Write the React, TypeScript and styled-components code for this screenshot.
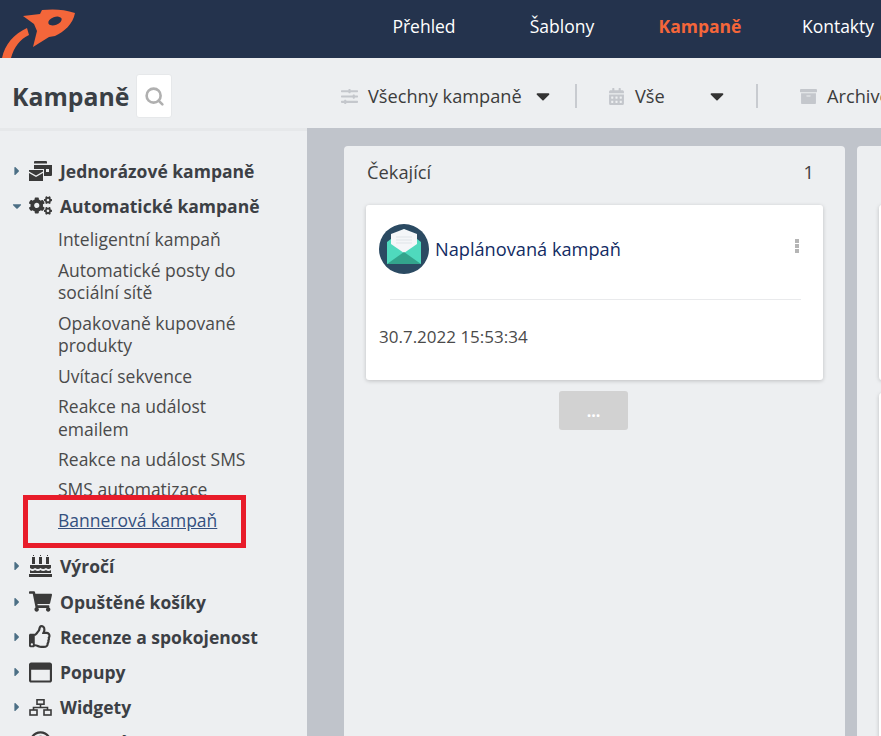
import React from 'react';
import styled, { createGlobalStyle } from 'styled-components';
import { FaCaretDown, FaCaretRight, FaCogs, FaShoppingCart, FaRegThumbsUp, FaRegWindowMaximize, FaSlidersH, FaCalendarAlt, FaArchive, FaRegClock } from 'react-icons/fa';
import { Search } from 'lucide-react';

const Global = createGlobalStyle`
    html, body { margin: 0; padding: 0; height: 100%; overflow: hidden; }
    body { font-family: "Open Sans", "Noto Sans", sans-serif; background: #edeff1; color: #3c3c3c; }
    a { color: inherit; }
`;

const Page = styled.div`
    position: relative;
    width: 881px;
    height: 736px;
    overflow: hidden;
    display: flex;
    flex-direction: column;
`;

const TopBar = styled.header`
    height: 58px;
    flex: none;
    background: #24334d;
    display: flex;
    overflow: hidden;
`;

const Logo = styled.svg`
    width: 78px;
    height: 58px;
    display: block;
    flex: none;
`;

const Nav = styled.nav`
    display: flex;
    align-items: center;
    margin-left: 277px;
    padding-bottom: 6px;
`;

const NavItem = styled.a<{ $active?: boolean }>`
    width: 138px;
    flex: none;
    text-align: center;
    font-size: 17.5px;
    font-weight: ${p => (p.$active ? 700 : 400)};
    color: ${p => (p.$active ? '#f4663a' : '#fff')};
    white-space: nowrap;
`;

const SubBar = styled.div`
    height: 70px;
    flex: none;
    display: flex;
    align-items: center;
    overflow: hidden;
    padding-top: 6px;
    box-sizing: border-box;
`;

const TitleBlock = styled.div`
    width: 341px;
    flex: none;
    display: flex;
    align-items: center;
    gap: 7px;
    padding-left: 12px;
    box-sizing: border-box;
`;

const Title = styled.h1`
    margin: 0;
    font-size: 24.8px;
    font-weight: 700;
    color: #3a3f45;
`;

const SearchBox = styled.div`
    width: 36px;
    height: 44px;
    background: #fff;
    border: 1px solid #e6e8ea;
    border-radius: 3px;
    box-sizing: border-box;
    display: flex;
    align-items: center;
    justify-content: center;
    color: #b0b0b0;
`;

const Filters = styled.div`
    display: flex;
    align-items: center;
    white-space: nowrap;
    font-size: 18.2px;
    color: #3c3c3c;
`;

const Filter = styled.div<{ $width: number }>`
    width: ${p => p.$width}px;
    flex: none;
    display: flex;
    align-items: center;
    gap: 10px;
    svg.lead { color: #c4c7cc; font-size: 17px; flex: none; }
    svg.caret { color: #333; font-size: 22px; margin-left: auto; flex: none; }
`;

const Divider = styled.span<{ $margin: number }>`
    width: 2px;
    height: 24px;
    background: #c8cbd0;
    flex: none;
    margin: 0 ${p => p.$margin}px 0 28px;
`;

const Body = styled.div`
    flex: 1;
    min-height: 0;
    display: flex;
`;

const Sidebar = styled.aside`
    width: 307px;
    flex: none;
    padding: 22px 0 0 12px;
    box-sizing: border-box;
    border-top: 3px solid #e6e8ea;
    overflow: hidden;
`;

const Group = styled.div`
    height: 35.2px;
    display: flex;
    align-items: center;
    font-size: 17.5px;
    font-weight: 700;
    color: #3c4045;
    white-space: nowrap;
`;

const Caret = styled.span`
    width: 19px;
    flex: none;
    color: #4c6f85;
    font-size: 14px;
    display: flex;
    margin-left: -2px;
`;

const GroupIcon = styled.span`
    width: 31px;
    flex: none;
    display: flex;
    font-size: 23px;
    color: #3a3a3a;
`;

const SubList = styled.div`
    padding: 2px 40px 0 46px;
    margin-bottom: 13px;
`;

const SubItem = styled.a<{ $link?: boolean }>`
    display: block;
    font-size: 17.5px;
    line-height: 22.7px;
    padding: 3px 0 4.6px;
    color: ${p => (p.$link ? '#34507f' : '#4a4a4a')};
    text-decoration: ${p => (p.$link ? 'underline' : 'none')};
`;

const Highlight = styled.div`
    position: absolute;
    left: 23px;
    top: 495px;
    width: 223px;
    height: 53px;
    border: 5px solid #e81c2a;
    box-sizing: border-box;
`;

const Board = styled.main`
    flex: 1;
    min-width: 0;
    background: #c0c4cb;
    padding: 18px 0 0 37px;
    display: flex;
    gap: 12px;
    overflow: hidden;
`;

const Column = styled.section`
    width: 501px;
    flex: none;
    background: #edeff1;
    border-radius: 4px 4px 0 0;
    padding: 0 22px;
    box-sizing: border-box;
`;

const ColumnHead = styled.div`
    height: 59px;
    display: flex;
    align-items: center;
    justify-content: space-between;
    font-size: 18.3px;
    padding: 0 9px 8px 1px;
    box-sizing: border-box;
    color: #3f3f3f;
`;

const Card = styled.article<{ $tall?: boolean }>`
    background: #fff;
    border-radius: 3px;
    box-shadow: 0 1px 4px rgba(0, 0, 0, 0.2);
    height: ${p => (p.$tall ? 400 : 175)}px;
    margin-bottom: 13px;
    padding: 0 13px;
    box-sizing: border-box;
`;

const CardHead = styled.div`
    height: 94px;
    display: flex;
    align-items: center;
    gap: 6px;
    padding-bottom: 7px;
    box-sizing: border-box;
`;

const CardTitle = styled.span`
    font-size: 18.2px;
    font-weight: 500;
    color: #122b63;
`;

const MoreDots = styled.svg`
    width: 4px;
    height: 14px;
    margin: 0 11px 6px auto;
    flex: none;
`;

const CardRule = styled.hr`
    border: 0;
    border-top: 1px solid #e9eaec;
    margin: 0 9px 0 11px;
`;

const CardDate = styled.div`
    font-size: 17px;
    color: #4a4a4a;
    margin-top: 25px;
`;

const MoreButton = styled.button`
    display: block;
    width: 69px;
    height: 39px;
    margin: -2px 0 0 193px;
    border: 0;
    border-radius: 3px;
    background: #d2d2d2;
    color: #fff;
    font: 700 16px "Open Sans", sans-serif;
`;

const EnvelopeIcon = () => (
    <svg width="50" height="50" viewBox="0 0 50 50">
        <circle cx="25" cy="25" r="25" fill="#2b4a62" />
        <path d="M8 18 L25 5 L42 18 V40 H8 Z" fill="#4fd9bd" />
        <path d="M12 20 V10 L25 5 L38 10 V20 L25 29 Z" fill="#f4f6f8" />
        <path d="M17 13 H33 M17 16 H33 M17 19 H33" stroke="#dfe4e8" strokeWidth="1" />
        <path d="M8 40 L25 28 L42 40 Z" fill="#33a48c" />
    </svg>
);

const RocketLogo = () => (
    <Logo viewBox="0 0 78 58">
        <path d="M2 58 C5 44 14 34 27 28 L29 35 C20 39 14 47 11 58 Z" fill="#f4663a" />
        <path d="M23 16 L40 14 L42 10 C52 9 64 9 75 13 C73 24 64 32 55 36 L49 37 L33 47 L37 31 L34 24 Z" fill="#f4663a" />
        <ellipse cx="55" cy="21" rx="7" ry="4" transform="rotate(-20 55 21)" fill="#24334d" />
    </Logo>
);

const MailCaseIcon = () => (
    <svg width="23" height="20" viewBox="0 0 23 20" fill="currentColor">
        <path d="M5 2.5 V1 Q5 0 6 0 H17 Q18 0 18 1 V2.5 Z" />
        <path d="M5 4 H23 V14 Q23 15 22 15 H15 V8 H5 Z" />
        <rect x="17" y="8" width="3" height="3" fill="#edeff1" />
        <path d="M0 9 H14 V10.5 L7 14.5 L0 10.5 Z" />
        <path d="M0 12 L7 16 L14 12 V20 H0 Z" />
    </svg>
);

const CakeIcon = () => (
    <svg width="23" height="22" viewBox="0 0 23 22" fill="currentColor">
        <path d="M3 2 H6 V9 H3 Z M10 2 H13 V9 H10 Z M17 2 H20 V9 H17 Z" />
        <path d="M4 0 H5 V1 H4 Z M11 0 H12 V1 H11 Z M18 0 H19 V1 H18 Z" />
        <path d="M1 10 H22 V13 Q19.5 15 17 13 Q14 15 11.5 13 Q9 15 6 13 Q3.5 15 1 13 Z" />
        <path d="M1 15 Q3.5 17 6 15 Q9 17 11.5 15 Q14 17 17 15 Q19.5 17 22 15 V18 H1 Z" />
        <path d="M0 19 H23 V22 H0 Z" />
    </svg>
);

const NetworkIcon = () => (
    <svg width="23" height="17" viewBox="0 0 23 17" fill="none" stroke="currentColor" strokeWidth="1.6">
        <rect x="8" y="0.8" width="7" height="4.4" />
        <path d="M11.5 5 V8.5 M4.5 11 V8.5 H18.5 V11" />
        <rect x="1" y="11" width="7" height="5" />
        <rect x="15" y="11" width="7" height="5" />
    </svg>
);

const subItems = [
    'Inteligentní kampaň',
    'Automatické posty do sociální sítě',
    'Opakovaně kupované produkty',
    'Uvítací sekvence',
    'Reakce na událost emailem',
    'Reakce na událost SMS',
    'SMS automatizace',
];

const lowerGroups = [
    { name: 'Výročí', icon: <CakeIcon /> },
    { name: 'Opuštěné košíky', icon: <FaShoppingCart /> },
    { name: 'Recenze a spokojenost', icon: <FaRegThumbsUp /> },
    { name: 'Popupy', icon: <FaRegWindowMaximize /> },
    { name: 'Widgety', icon: <NetworkIcon /> },
    { name: 'Ostatní', icon: <FaRegClock /> },
];

export default function App() {
    return (
        <Page>
            <Global />
            <TopBar>
                <RocketLogo />
                <Nav>
                    <NavItem>Přehled</NavItem>
                    <NavItem>Šablony</NavItem>
                    <NavItem $active>Kampaně</NavItem>
                    <NavItem>Kontakty</NavItem>
                </Nav>
            </TopBar>
            <SubBar>
                <TitleBlock>
                    <Title>Kampaně</Title>
                    <SearchBox><Search size={21} strokeWidth={3} /></SearchBox>
                </TitleBlock>
                <Filters>
                    <Filter $width={206}>
                        <FaSlidersH className="lead" />
                        Všechny kampaně
                        <FaCaretDown className="caret" />
                    </Filter>
                    <Divider $margin={31} />
                    <Filter $width={120}>
                        <FaCalendarAlt className="lead" />
                        Vše
                        <FaCaretDown className="caret" />
                    </Filter>
                    <Divider $margin={42} />
                    <Filter $width={160}>
                        <FaArchive className="lead" />
                        Archivované
                    </Filter>
                </Filters>
            </SubBar>
            <Body>
                <Sidebar>
                    <Group>
                        <Caret><FaCaretRight /></Caret>
                        <GroupIcon><MailCaseIcon /></GroupIcon>
                        Jednorázové kampaně
                    </Group>
                    <Group>
                        <Caret><FaCaretDown /></Caret>
                        <GroupIcon><FaCogs /></GroupIcon>
                        Automatické kampaně
                    </Group>
                    <SubList>
                        {subItems.map(item => <SubItem key={item}>{item}</SubItem>)}
                        <SubItem $link>Bannerová kampaň</SubItem>
                    </SubList>
                    {lowerGroups.map(group => (
                        <Group key={group.name}>
                            <Caret><FaCaretRight /></Caret>
                            <GroupIcon>{group.icon}</GroupIcon>
                            {group.name}
                        </Group>
                    ))}
                </Sidebar>
                <Board>
                    <Column>
                        <ColumnHead>
                            <span>Čekající</span>
                            <span>1</span>
                        </ColumnHead>
                        <Card>
                            <CardHead>
                                <EnvelopeIcon />
                                <CardTitle>Naplánovaná kampaň</CardTitle>
                                <MoreDots viewBox="0 0 4 14" fill="#b5b5b5">
                                    <rect y="0" width="4" height="4" />
                                    <rect y="5" width="4" height="4" />
                                    <rect y="10" width="4" height="4" />
                                </MoreDots>
                            </CardHead>
                            <CardRule />
                            <CardDate>30.7.2022 15:53:34</CardDate>
                        </Card>
                        <MoreButton>...</MoreButton>
                    </Column>
                    <Column>
                        <ColumnHead />
                        <Card />
                        <Card $tall />
                    </Column>
                </Board>
            </Body>
            <Highlight />
        </Page>
    );
}
